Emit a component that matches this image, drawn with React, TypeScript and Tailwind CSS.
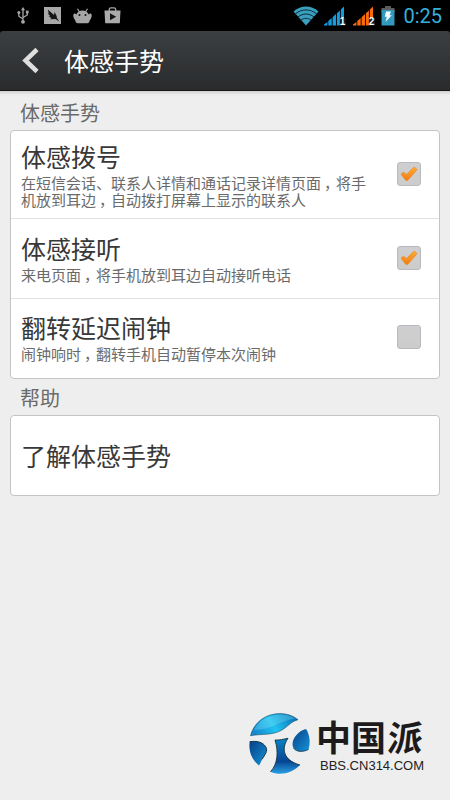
import React, { useState } from 'react';
import clsx from 'clsx';

interface CheckProps {
  checked: boolean;
}

interface RowProps {
  title: string;
  summary: string[];
  checked: boolean;
  className: string;
  onToggle: () => void;
}

const UsbIcon = () => (
  <svg width="12" height="17" viewBox="0 0 12 17" fill="none" stroke="#a6a6a6" strokeWidth="1.3">
    <path d="M6 2v13M1.8 6v3.2L6 12M10.3 5v3L6 10.5" />
    <path d="M6 0L8 3.3H4z" fill="#a6a6a6" stroke="none" />
    <circle cx="1.9" cy="5.6" r="1.5" fill="#a6a6a6" stroke="none" />
    <path d="M8.9 3.6h2.7v2.8H8.9z" fill="#a6a6a6" stroke="none" />
    <circle cx="6" cy="14.8" r="1.9" fill="#a6a6a6" stroke="none" />
  </svg>
);

const FeatherIcon = () => (
  <svg width="17" height="17" viewBox="0 0 17 17">
    <path d="M0 0h17v17H0z" fill="#a9a9a9" />
    <path d="M3.800 2.500L10 8l.6-3 2 4 .4 2.200 2.400 3.300-4-2.400-5.400.2 1.500-1.200-3-1.600 1.800-.3-2.700-3 1.200.2z" fill="#151515" />
  </svg>
);

const AndroidIcon = () => (
  <svg width="19" height="16" viewBox="0 0 19 16">
    <path d="M4.500 .8l2 3.200M14.500 .8l-2 3.200" stroke="#a6a6a6" strokeWidth="1.200" />
    <path d="M1 10.500C0 8 0 6 1.300 5.500c.9-.3 1.600.3 2 1C4.500 3.700 6.700 2.500 9.500 2.500s5 1.200 6.200 4c.4-.7 1.100-1.300 2-1C19 6 19 8 18 10.500c-.3.800-.8 1-1.200 1.500 0 1.300-.6 2.500-1.600 2.900-1.700.6-9.700.6-11.400 0-1-.4-1.600-1.600-1.600-2.900-.4-.5-.9-.7-1.200-1.500z" fill="#a6a6a6" />
    <circle cx="6.500" cy="7" r="1" fill="#111" />
    <circle cx="12.500" cy="7" r="1" fill="#111" />
  </svg>
);

const StoreIcon = () => (
  <svg width="17" height="17" viewBox="0 0 17 17">
    <path d="M5.300 4V2.500Q5.300.9 7 .9h3q1.700 0 1.700 1.600V4" fill="none" stroke="#a6a6a6" strokeWidth="1.300" />
    <path d="M.5 3.500h16L15.800 16.300H1.200z" fill="#ababab" />
    <path d="M6 6.300l6.200 3.500L6 13.300z" fill="#151515" />
  </svg>
);

const WifiIcon = () => (
  <svg width="26" height="20" viewBox="0 0 26 20">
    <path d="M.5 5.500C8-1.200 18-1.200 25.500 5.500L13 19.500z" fill="#3a9fbf" />
    <path d="M2.500 7.800C9 2.600 17 2.600 23.500 7.800M5 11c5-4 11-4 16 0M7.800 14.200c3.300-2.500 7.100-2.500 10.400 0" fill="none" stroke="#0a2d3a" strokeWidth="1" />
  </svg>
);

const SignalIcon = ({ color, sim }: { color: string; sim: string }) => (
  <svg width="24" height="20" viewBox="0 0 24 20">
    <g fill={color}>
      <path d="M0 19.500v-1l3.400-2.400v3.400zM4.300 19.500v-4.400l3.400-3v7.400zM8.600 19.500v-8.300L12 8v11.500zM12.900 19.500V7.200l3-2.800v15.100zM16.800 19.500V3.600L20 .5v19z" />
    </g>
    <path d="M16 12h6v8h-6z" fill="#10181c" />
    <text x="15.800" y="19.400" fill="#fff" fontSize="10" fontWeight="700" fontFamily="Liberation Sans, sans-serif">{sim}</text>
  </svg>
);

const BatteryIcon = () => (
  <svg width="14" height="20" viewBox="0 0 14 20">
    <path d="M4 0h6v2h3.500v4H.5V2H4z" fill="#5c5c5c" />
    <path d="M.5 4h13v15.500H.5z" fill="#3298bd" />
    <path d="M5 5.500h5L8.500 9.200h2.300L4.500 16l1.300-5.300H3.700z" fill="#f3fbff" />
  </svg>
);

const Check = ({ checked }: CheckProps) => (
  <span className="flex h-6 w-6 shrink-0 items-center justify-center rounded-[3px] border border-[#b9b9c0] bg-gradient-to-b from-[#cfcfd1] to-[#cccccc]">
    {checked && (
      <svg width="18" height="16" viewBox="0 0 18 16">
        <defs>
          <linearGradient id="tick" x1="0" y1="0" x2="0" y2="1">
            <stop offset="0" stopColor="#ffad2f" />
            <stop offset="1" stopColor="#f27a12" />
          </linearGradient>
        </defs>
        <path d="M1 8.200l2.300-2 3.400 2.200 6.600-6.600q.8-.6 1.600-.1l1.600 1.200q.6.7 0 1.400L8 14q-1.200 1.200-2.500.1z" fill="url(#tick)" stroke="#e98b28" strokeWidth=".8" strokeLinejoin="round" />
      </svg>
    )}
  </span>
);

// Half-width comma glyph centred in a full-width cell
const Summary = ({ text }: { text: string }) => (
  <>
    {text.split('，').map((part, i) => (
      <React.Fragment key={i}>
        {i > 0 && <span className="inline-block w-[15px] pl-[3px] [font-feature-settings:'halt']">，</span>}
        {part}
      </React.Fragment>
    ))}
  </>
);

const SettingRow = ({ title, summary, checked, className, onToggle }: RowProps) => (
  <div
    role="checkbox"
    aria-checked={checked}
    onClick={onToggle}
    className={clsx('flex items-center justify-between pr-[18px] pl-[10px]', className)}
  >
    <div>
      <div className="text-[25px] leading-[30px] text-[#383838]">{title}</div>
      <div className="mt-[3px] text-[15px] leading-[17px] whitespace-nowrap text-[#6a6a6a]">
        {summary.map((line) => (
          <div key={line}>
            <Summary text={line} />
          </div>
        ))}
      </div>
    </div>
    <Check checked={checked} />
  </div>
);

const SiteLogo = () => (
  <svg width="62" height="62" viewBox="0 0 62 62">
    <defs>
      <linearGradient id="top" x1="0" y1=".6" x2="1" y2=".3">
        <stop offset="0" stopColor="#1387cf" />
        <stop offset=".45" stopColor="#22c3f0" />
        <stop offset="1" stopColor="#0871b8" />
      </linearGradient>
      <linearGradient id="low" x1="0" y1="0" x2="0" y2="1">
        <stop offset="0" stopColor="#0a84c8" />
        <stop offset=".65" stopColor="#064593" />
        <stop offset="1" stopColor="#2aa0e4" />
      </linearGradient>
      <linearGradient id="side" x1="0" y1="0" x2="1" y2="1">
        <stop offset="0" stopColor="#063f87" />
        <stop offset="1" stopColor="#1694d8" />
      </linearGradient>
    </defs>
    <path d="M1.500 22.700C5 9 17 .6 31 .6c7 0 13 2.200 18 6.100-6 1.500-9 5.300-14 9C25 23 13 20.500 1.500 22.700z" fill="url(#top)" stroke="#17506a" strokeWidth=".6" />
    <path d="M5 17C11 6 21 1.500 32 1.500c6 0 10 1.500 14 4C32 7 23 17 5 17z" fill="#8be5fa" opacity=".3" />
    <path d="M.7 28.700c7-1 13 .3 16 5 2.600 4.500-1 8-3.500 12.500-1.300 2.500-1.700 4.500-3.200 6.300C2 46 -.5 37.500.7 28.700z" fill="url(#side)" />
    <path d="M.7 28.700c7-1 13 .3 16 5 2.600 4.500-1 8-3.500 12.500" fill="none" stroke="#17333d" strokeWidth="1" />
    <path d="M26 27c5 .4 8-.8 13-1.700-7 10-5 22 12 26.700-8 8.500-20 11-29.500 6.700C29 51 29.500 38 26 27z" fill="url(#low)" />
    <path d="M26 27c3.500 11 3 24-4.500 31.700M26 27c5 .4 8-.8 13-1.700-7 10-5 22 12 26.700" fill="none" stroke="#17333d" strokeWidth=".9" />
    <path d="M57 16c4 6 4.500 14 2.500 20.500-5 2.500-12 3-15-1.500-3.500-6.500 3-16.500 12.500-19z" fill="url(#side)" />
    <path d="M59.500 36.500c-5 2.500-12 3-15-1.500" fill="none" stroke="#17333d" strokeWidth=".8" />
  </svg>
);

export default function App() {
  const [enabled, setEnabled] = useState([true, true, false]);
  const toggle = (index: number) => setEnabled(enabled.map((on, i) => (i === index ? !on : on)));

  return (
    <div className="flex h-[800px] w-[450px] flex-col overflow-hidden bg-[#eee] font-['Noto_Sans_CJK_SC',sans-serif]">
      <div className="flex h-[31px] shrink-0 items-center justify-between bg-black pr-[8px] pl-[17px]">
        <div className="flex items-center">
          <UsbIcon />
          <span className="ml-[15px]"><FeatherIcon /></span>
          <span className="ml-[12px]"><AndroidIcon /></span>
          <span className="ml-[12px]"><StoreIcon /></span>
        </div>
        <div className="flex items-center">
          <WifiIcon />
          <span className="ml-[5px]"><SignalIcon color="#169be0" sim="1" /></span>
          <span className="ml-[5px]"><SignalIcon color="#fa6a0a" sim="2" /></span>
          <span className="ml-[4px]"><BatteryIcon /></span>
          <span className="ml-[8px] pt-px font-[Roboto,sans-serif] text-[20px] leading-[30px] text-[#35b0dc]">0:25</span>
        </div>
      </div>

      <div className="bg-black">
        <div className="flex h-[60px] shrink-0 items-center rounded-t-[3px] border-b border-[#171717] bg-gradient-to-b from-[#3c3f41] to-[#292b2d] pl-[22px]">
          <svg width="18" height="27" viewBox="0 0 18 27" fill="none">
            <path d="M15 2.500L3.500 13.500 15 24.500" stroke="#dedede" strokeWidth="4.500" />
          </svg>
          <h1 className="ml-[24px] pb-px text-[25px] leading-[36px] text-white">体感手势</h1>
        </div>
      </div>
      <div className="h-[4px] shrink-0 bg-gradient-to-b from-[#cfcfcf] to-[#eee]" />

      <div className="flex flex-col px-[10px]">
        <h2 className="h-[35px] pl-[10px] text-[20px] leading-[35px] text-[#6a6a6a]">体感手势</h2>
        <div className="h-[249px] rounded-[4px] border border-[#c4c4c4] bg-white">
          <SettingRow
            className="h-[88px] border-b border-[#e2e2e2] pb-px"
            title="体感拨号"
            summary={['在短信会话、联系人详情和通话记录详情页面，将手', '机放到耳边，自动拨打屏幕上显示的联系人']}
            checked={enabled[0]}
            onToggle={() => toggle(0)}
          />
          <SettingRow
            className="h-[80px] border-b border-[#e2e2e2] pb-px"
            title="体感接听"
            summary={['来电页面，将手机放到耳边自动接听电话']}
            checked={enabled[1]}
            onToggle={() => toggle(1)}
          />
          <SettingRow
            className="h-[79px] pb-[3px]"
            title="翻转延迟闹钟"
            summary={['闹钟响时，翻转手机自动暂停本次闹钟']}
            checked={enabled[2]}
            onToggle={() => toggle(2)}
          />
        </div>
        <h2 className="h-[36px] pl-[10px] text-[20px] leading-[37px] text-[#6a6a6a]">帮助</h2>
        <div className="flex h-[81px] items-center rounded-[4px] border border-[#c4c4c4] bg-white pb-[2px] pl-[10px] text-[25px] leading-[36px] text-[#383838]">
          了解体感手势
        </div>
      </div>

      <div className="mt-auto flex items-center self-end pr-[26px] pb-[25px]">
        <SiteLogo />
        <div className="ml-[7px] flex w-[106px] flex-col">
          <div className="flex justify-between text-[35px] leading-[40px] text-[#1c1a1b]">
            <span className="w-[30px] -indent-[2px] font-bold">中</span>
            <span className="w-[34px] font-bold">国</span>
            <span className="w-[36px] -skew-x-6 font-bold">派</span>
          </div>
          <div className="mt-[3px] ml-[2px] font-['Liberation_Sans',sans-serif] text-[13px] leading-[14px] whitespace-nowrap text-[#222]">BBS.CN314.COM</div>
        </div>
      </div>
    </div>
  );
}
